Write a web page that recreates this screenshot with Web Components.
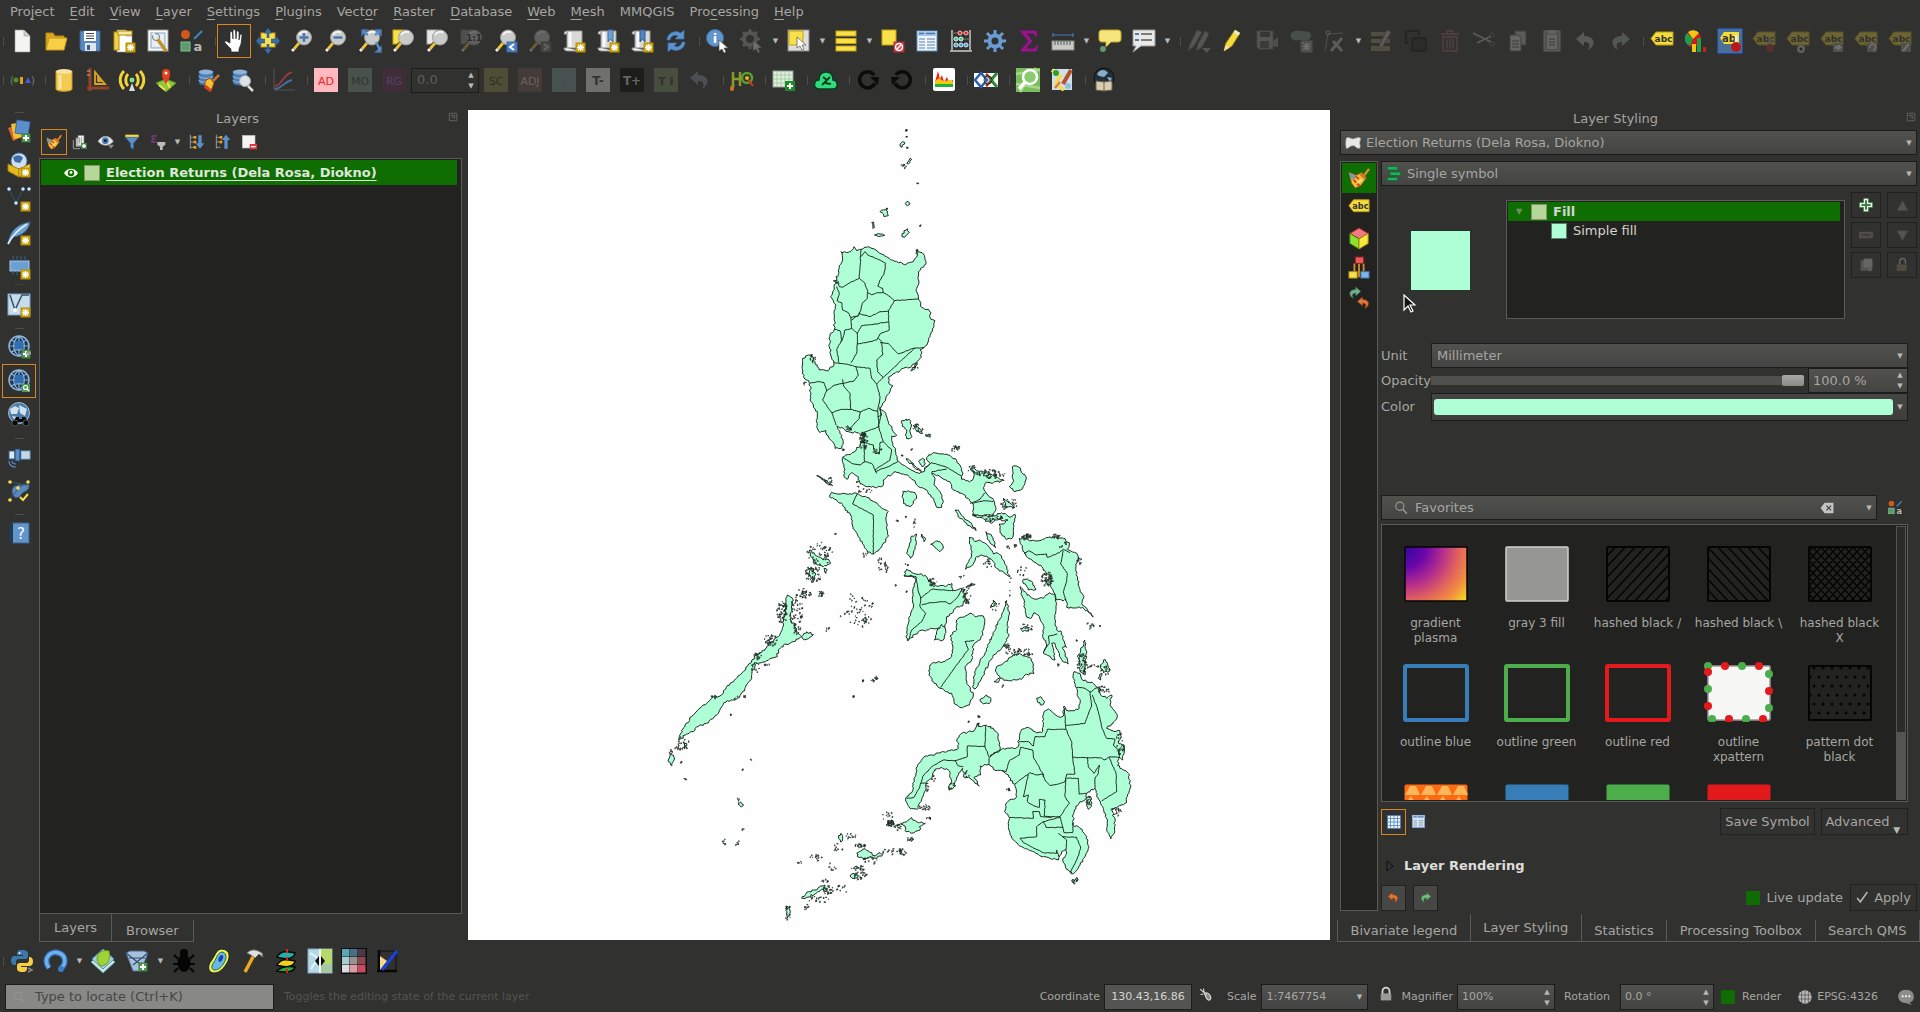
<!DOCTYPE html>
<html lang="en">
<head>
<meta charset="utf-8">
<title>QGIS</title>
<style>
html,body{margin:0;background:#31312f}
body{font:13px/18px "DejaVu Sans",sans-serif;color:#a6a6a3}
</style>
</head>
<body>
<qg-app></qg-app>
<script>
/* ---------- icons, drawn on a 24 x 24 grid ---------- */
const P=(d,f,s,w)=>`<path d="${d}" fill="${f||'none'}"${s?` stroke="${s}" stroke-width="${w||1}"`:''}/>`;
const R=(x,y,w,h,f,s)=>`<rect x="${x}" y="${y}" width="${w}" height="${h}" fill="${f}"${s?` stroke="${s}"`:''}/>`;
const C=(x,y,r,f,s,w)=>`<circle cx="${x}" cy="${y}" r="${r}" fill="${f}"${s?` stroke="${s}" stroke-width="${w||1}"`:''}/>`;
const T=(x,y,t,f,z,b)=>`<text x="${x}" y="${y}" fill="${f}" font-size="${z}" text-anchor="middle" font-weight="${b||'bold'}" font-family="DejaVu Sans,sans-serif">${t}</text>`;
const star=(x,y)=>R(x,y,9,9,'#d3a60b','#b58d04')+P(`M${x+4.5} ${y+1}v7M${x+1} ${y+4.5}h7M${x+2} ${y+2}l5 5M${x+7} ${y+2}l-5 5`,'','#fff',1.3);
const plus=(x,y)=>R(x,y,8,8,'#4f9a52','#3c7f40')+P(`M${x+4} ${y+1}v6M${x+1} ${y+4}h6`,'','#fff',2);
const ptr=(x,y)=>P(`M${x} ${y}v11l3-2 2 4 2-1-2-4h4z`,'#fff','#555',.7);
const mag=(g='')=>P('M9 14L2 22','','#222',4.5)+P('M9 14L4 20','','#e8c13a',3)+P('M4 20l-2 2','','#eee',3)+C(14,8.5,7.5,'#c9cbc9','#9a9c9a')+P('M9 6a6 6 0 0 1 8-2.5','','#f4f4f4',2)+g;
const page=(c='#f4f4f2')=>P('M5 1h9l6 6v16H5z',c,'#999',.6)+P('M14 1v6h6','#ccc','#999',.6);
const scroll=g=>P('M5 2h15v17H5z','#d9dad8','#999')+P('M5 2a3 3 0 0 0-3 3h3zM5 19H2c0 3 3 3 5 3h12','#eee','#999')+P('M8 3v15','','#f8f8f8',3)+g+star(14,14);
const tag=g=>P('M6 3h17v13H6l-5-6.500z','#f4dc3a','#b89c10')+T(13.5,13,'abc','#333',9)+(g||'');
const box=(bg,fg,t)=>R(0,0,24,24,bg)+T(12,16.5,t,fg,11,'normal');
const globe=(f,s)=>C(12,11,10,f,s,1.5)+P('M2 11h20M12 1v20M4 5c5 3 11 3 16 0M4 17c5-3 11-3 16 0M12 1c-7 5-7 15 0 20M12 1c7 5 7 15 0 20','',s,1.2);
const brush=P('M23 2l-6 8','','#e8892b',2.5)+P('M1 6l8 3 6-3 5 6-6 8-6 3-4-5z','#f1c232','#a5471c',.8)+P('M1 6l7 3-1 5-4-1z','#7a9ab0')+P('M6 14l7 7M8 10l4 3','','#d9401f',2)+P('M13 7l6 6','','#c9752c',2.5)+P('M9 18l6-4','','#fbe9a0',1.5);
const hdb=P('M3 3v12c0 3 14 3 14 0V3','#4f7fb5','#2f5580')+`<ellipse cx="10" cy="4" rx="7" ry="2.5" fill="#8fb4da"/>`+P('M3 8c0 3 14 3 14 0M3 12c0 3 14 3 14 0','','#9cc0e6');
const sheet=R(2,2,20,20,'#eef3f8','#5d8cc0')+R(2,2,20,5,'#a9c8e8')+P('M4 4.5h5M11 4.5h9','','#4a78b0',1.5);
const undoP='M10 3L2 10l8 7v-4c5 0 7 2 4 8 8-4 8-14-4-14z';
const flip=s=>`<g transform="translate(24 0) scale(-1 1)">${s}</g>`;
const I={
new:page(),
open:P('M2 20V4h7l2 3h9v4','#d9a520','#b88710')+P('M2 21l3-12h18l-3 12z','#f5cf45','#c9971a'),
save:P('M2 2h20v20H4l-2-2z','#5b88bd','#3a628f')+R(6,2,12,10,'#fff')+P('M8 4.5h8M8 7h8M8 9.5h8','','#444',1.2)+R(7,14,11,8,'#dfe5ea')+R(9,16,3,5,'#35608f'),
layout:page('#fff')+R(2,3,5,18,'#f0cf52','#b58d04')+R(6,2,14,4,'#f7e9a0','#b58d04')+star(14,14),
manager:R(2,1,20,21,'#fff','#9a9a98')+R(5,4,14,15,'#e9eef3','#7aa3cf')+P('M10 8l10 14','','#bf9324',3.5)+C(10,8,3.5,'#e8e8e6','#777')+P('M7 4l3 4','','#e9eef3',2.5),
style:C(5.5,5.5,4.5,'#d4571c')+P('M22 2l-8 8','','#3f86c8',2)+R(1,13,9,9,'#5d9a70','#7fc08d')+T(18,22,'a','#b9b9b6',13),
pan:P('M6 13l2 1V4c0-2 2-2 2.5 0l.5 6V2c0-2 2-2 2.5 0l.5 8 .5-7c0-1.5 2-1.5 2.5 0v8l1-5c.5-1.5 2-1 2 .5L19 15l-2 5v3H9v-3L3 14c-1-2 1-3 3-1z','#fff','#222',.7),
pansel:R(5,4,14,14,'#f7e04a','#c3a412')+P('M12-1l4 5h-3v6h7V7l4 5-4 5v-3h-7v6h3l-4 5-4-5h3v-6H4v3l-4-5 4-5v3h7V4H8z','#3a6ea8','#24456c',.5)+R(9,9,6,6,'#f7e04a'),
zin:mag(P('M14 4v9M9.500 8.500h9','','#4a78b0',2.5)),
zout:mag(P('M9.500 8.500h9','','#4a78b0',2.5)),
zfull:mag(P('M4 1h5L4 6zM23 1v5l-5-5zM23 18v5h-5z','#5b8fca','#4a7ab5',1.5)+P('M6 3l4 3M21 3l-4 3M18 13l4 8','','#5b8fca',2.5)),
zsel:R(1,1,11,14,'#f7e04a','#c3a412')+mag(),
zlay:R(1,1,11,14,'#e8e8e6','#aaa')+mag(),
z11:R(1,1,11,14,'#999','#777')+mag(T(14,12,'1:1','#222',9)),
zlast:mag(R(13,13,10,10,'#4a82c0','#386aa5')+P('M20 15l-4 3 4 3','','#fff',2)),
znext:mag(R(13,13,10,10,'#777','#555')+P('M16 15l4 3-4 3','','#ddd',2)),
bm1:scroll(''),bm2:scroll(P('M12 1h5v12l-2.500-3-2.500 3z','#6c9fd2','#3d6ea3')),bm3:scroll(P('M10 1h5v12l-2.500-3-2.500 3z','#4f86c0','#2d5a8c')),
refresh:P('M3 11a9 9 0 0 1 14-7l3-3v9h-9l3-3c-4-2-7 0-8 4zM21 13a9 9 0 0 1-14 7l-3 3v-9h9l-3 3c4 2 7 0 8-4z','#5b93cf','#3d70a8',.7),
info:C(9,9,8.5,'#6294cd','#3f70a8')+T(9,14,'i','#fff',13)+ptr(13,11),
action:C(10,10,6,'none','#aaa',4)+P('M10 0v4M10 16v4M0 10h4M16 10h4M3 3l3 3M14 14l3 3M17 3l-3 3M6 14l-3 3','','#aaa',2.5)+ptr(13,11),
select:R(1,1,21,21,'#ddd','#888')+R(2,2,14,14,'#f7e04a','#c3a412')+ptr(10,8),
selval:R(2,2,20,5,'#f7e04a','#c3a412')+R(2,9.5,20,5,'#f7e04a','#c3a412')+R(2,17,20,5,'#f7e04a','#c3a412'),
desel:R(1,1,14,15,'#f7e04a','#c3a412')+R(13,13,10,10,'#d8434a','#b02a30')+C(18,18,3.5,'none','#fff',1.5)+P('M16 20l4-4','','#fff',1.5),
table:sheet+P('M4 10h6M12 10h8M4 13h6M12 13h8M4 16h6M12 16h8M4 19h6M12 19h8','','#5c83ad',1.2),
abacus:P('M3 1v20M21 1v20M1 22h22','','#ccc',1.5)+P('M3 4h18M3 10h18M3 16h18','','#777',1)+C(11,4,2,'#d22','#fbb')+C(17,4,2,'#d22','#fbb')+C(7,10,2,'#5b9','#cfe')+C(12,10,2,'#5b9','#cfe')+C(7,16,2,'#59c','#cef')+C(12,16,2,'#59c','#cef')+C(17,16,2,'#59c','#cef'),
gear:C(12,12,5.5,'none','#6a9bd2',4)+P('M12 1v5M12 18v5M1 12h5M18 12h5M4 4l4 4M16 16l4 4M20 4l-4 4M8 16l-4 4','','#6a9bd2',3),
sigma:P('M4 2h15l1 5h-2c0-3-2-3-3-3H9l6 8-7 8h8c2 0 3-1 4-4h1l-2 6H4v-1l8-9-8-9z','#a10f96','#a10f96',.8),
ruler:P('M2 4v4M22 4v4M2 6h20','','#4a78b0',1.2)+R(1,12,22,9,'#c9c9c6','#888')+P('M4 12v4M7 12v4M10 12v4M13 12v4M16 12v4M19 12v4','','#555',1),
tip:P('M4 1h16c2 0 3 1 3 3v6c0 2-1 3-3 3h-7l-5 5v-5H4c-2 0-3-1-3-3V4c0-2 1-3 3-3z','#f6e57c','#c3a828')+C(5,20,3,'#5d9a70'),
anno:P('M1 1h22v16H9l-8 6 3-6H1z','#e9e9e7','#999')+R(3,4,4,2,'#4a78b0')+R(3,10,4,2,'#4a78b0')+P('M9 5h11M9 11h11','','#555',1.5),
pens:P('M1 22l2-7L10 1l5 2-8 14zM9 22l2-7 7-13 4 3-7 13z','#aaa','#666')+P('M15 19h9l-4.500 5z','#aaa'),
pencil:P('M3 22l2-8L14 1l5 3-8 13z','#f4dc3a','#a58a10')+P('M3 22l1.500-6 4 2.500z','#f0e0c0')+P('M14 1l5 3-1.500 2.500-5-3z','#e8e8e6'),
savee:P('M2 2h16v18H4l-2-2z','#aaa','#777')+R(5,3,10,5,'#444')+R(5,12,9,7,'#555')+P('M14 16l9-8v10z','#999'),
addpoly:P('M2 8c-2-6 6-7 10-6s10-1 10 4-4 6-8 5-10 3-12-3z','#7f968c')+R(12,12,11,11,'#888','#999')+P('M17.500 13v9M13 17.500h9M14 14l7 7M21 14l-7 7','','#fff',1.2),
vertex:P('M2 22L5 5l15-1','','#999')+C(5,4,2,'none','#ccc')+P('M8 22L19 9M10 12l9 10','','#bbb',3),
multi:R(1,3,19,4,'#98916a')+R(1,10,19,4,'#98916a')+R(1,17,19,5,'#98916a')+P('M8 21l2-6L17 1l4 2-8 14z','#bbb','#666'),
copymove:P('M5 14H2V2h13v4','','#0a0a0a',2)+`<rect x="8" y="9" width="14" height="13" rx="2" fill="#222" stroke="#0a0a0a" stroke-width="2"/>`,
trash:P('M3 5h18M9 4V2h6v2M5 8h14v14H5zM9 10v10M12 10v10M15 10v10','','#8c5a5a',1.8),
cut:P('M1 4l18 9M5 14l14-7','','#bbb',1.8)+C(20,6,2.2,'none','#777')+C(20,15,2.2,'none','#777'),
copy:R(9,2,11,14,'#bbb','#666')+P('M4 6h8l3 3v13H4z','#ddd','#666')+P('M6 12h7M6 15h7M6 18h7','','#555'),
paste:R(4,2,16,20,'#999','#ccc')+R(7,6,10,14,'#ddd')+R(8,1,8,4,'#ccc')+P('M9 10h6M9 13h6M9 16h6','','#555'),
undo:P(undoP,'#b4b4b0'),redo:flip(P(undoP,'#9fb0a8')),
label:tag(),
diagram:C(9,10,8,'#d21a1a')+P('M9 10L4 3a8 8 0 0 1 11 1z','#f3c614')+P('M9 10L3 4a8 8 0 0 0 3 13z','#1d9f4a')+R(8,15,4,8,'#f3c614')+R(13,9,4,14,'#1d9f4a')+R(19,18,3,5,'#d21a1a'),
lab2:R(0,0,24,24,'#4c6f96','#2b6be0')+P('M6 3h15v12H6l-4-6z','#f4dc3a')+T(11,13,'ab','#333',10)+P('M18 6v8','','#eee',2.5)+C(18,18,5,'#b81a1a'),
lab3:tag(P('M18 8v8','','#aaa',3)+C(18,19,4,'#a33')),
lab4:tag(C(15,20,4,'#ccc')+C(15,20,1.5,'#111')),
lab5:tag(R(13,14,10,9,'#999')+P('M15 17h3v-2l4 3.500-4 3.500v-2h-3z','#fff')),
lab6:tag(R(13,14,10,9,'#999')+P('M16 19a3 3 0 1 1 3 2','','#fff',1.5)),
lab7:tag(R(13,14,10,9,'#998')+P('M15 22l6-7','','#fff',2)),
/* second row */
dots:T(2,16,'(','#777',11,'normal')+C(6,12,2.5,'#4f8f2f')+R(10,9,3,7,'#e0a414')+P('M15 15l3-6 3 6z','#4b5ad0')+T(23,16,')','#777',11,'normal'),
cylinder:P('M4 3v18c0 3 16 3 16 0V3','#f1cb52','#c39a1d')+`<ellipse cx="12" cy="3.500" rx="8" ry="2.500" fill="#f8e2a0"/>`+P('M8 7v14','','#fae6a4',3),
square:P('M4 0v23M1 20h22','','#8f4527',3)+P('M9 16V4l10 12zM12 13v-3l3 3z','','#d9a520',1.8)+P('M1 3h3M1 7h3','','#d8b080',1),
antenna:C(12,12,3,'#7fe08a','#333')+P('M8 6c-3 3-3 9 0 12M4 3c-5 5-5 13 0 18','','#f0d23a',3)+P('M16 6c3 3 3 9 0 12M20 3c5 5 5 13 0 18','','#f0d23a',3)+P('M12 15l-3 8h6z','#ddd'),
pin:P('M2 15l10-4 10 4-10 9z','#8fc73e','#5b8f1d')+P('M5 17l6 5M12 12l4 8','','#f5e04a',2)+P('M12 16C8 10 8 8 8 5a4 4 0 0 1 8 0c0 3 0 5-4 11z','#e0401c')+C(12,5,1.5,'#fff'),
dbbrush:hdb+P('M23 7l-7 7','','#c9752c',2.5)+P('M9 13l5-3 4 5-3 8-6-3z','#f1c232','#a5471c')+P('M9 18l6 5','','#d9401f',3),
dbfind:hdb+C(15,13,5.5,'#dde3e8','#aaa')+P('M18 18l5 5','','#ddd',2.5),
graph:P('M2 1v21h21','','#555')+P('M3 18c8-1 5-9 17-14','','#a03c3c',1.8)+P('M3 21c8-1 8-7 17-9','','#4a6fa5',1.8),
ad:box('#ffb9bf','#f01c24','AD'),mo:box('#7d9c88','#35463c','MO'),rg:box('#5a2a54','#c060d0','RG'),
sc:box('#8c9148','#26271c','SC'),adj:box('#70504c','#e0d0cc','ADJ'),em:box('#7ca09a','#5a605c','.'),
tm:R(0,0,24,24,'#70706e')+T(12,17,'T-','#333',12),tp:R(0,0,24,24,'#1d1d1c')+T(12,17,'T+','#666664',12),
ti:R(0,0,24,24,'#7f9160')+T(12,17,'T I','#302f24',11),
undob:P(undoP,'#8795a8'),
hq:P('M3 4v16M10 4v14M3 11h7M1 20l3-4','','#8a9a2a',2.5)+C(17,10,5,'none','#5aa02c',2.5)+C(17,10,2,'#e8b31c')+P('M18 12l5 6','','#c83a1c',2)+C(2,21,2,'#e86b1c'),
gridadd:R(1,3,20,16,'#dff0df','#999')+P('M1 7h20M1 11h20M1 15h20M5 3v16M9 3v16M13 3v16M17 3v16','','#9cc79c',.8)+R(13,13,10,10,'#1f8a2c')+P('M18 15v6M15 18h6','','#fff',2),
cloud:P('M5 21c-7-1-5-9 0-9 0-7 4-8 7-8 6 0 7 4 7 8 5 0 6 9 0 9z','#2fdd7c','#0b3b20',1.5)+P('M8 17l8-8M11 15l6 1M13 12l-4-3','','#0b3b20',1.8),
cw:P('M18 7a8 8 0 1 0 1 8','','#0c0c0c',3.5)+P('M14 9h9l-1 8z','#0c0c0c'),
ccw:P('M6 7a8 8 0 1 1-1 8','','#0c0c0c',3.5)+P('M10 9H1l1 8z','#0c0c0c'),
hist:`<rect x="1" y="0" width="22" height="23" rx="2" fill="#fff"/>`+P('M3 14l3-11 2 8 2-4 2 7 3-5 2 5 4-2v3z','#e8261c')+P('M3 13l4-3 4 3 8-1 2 2v3H3z','#f3c614')+R(3,16,18,3,'#1db13a'),
ctrl:R(0,5,24,14,'#fff')+P('M1 12l6-7 6 7-6 7z','none','#2b5fa8',2.5)+P('M12 6l6 6-6 6','','#8c3a1c',2.5)+P('M23 5l-6 7 6 7','','#2a8a3a',3)+C(14,12,4,'none','#333',1),
osm:R(0,0,24,24,'#79bd5c')+P('M0 6l24-4M4 24L20 0M0 16l24 4','','#a6d98c',2.5)+C(14,9,7,'#8acb70','#fff',2.5)+P('M9 14l-6 7','','#fff',3.5),
maps:R(2,1,20,21,'#cfe0ea')+P('M2 2l8 6-4 8 8 6','','#f3dc5a',4)+C(6,5,3,'#2a9d3a')+C(18,18,3,'#8fc0dd')+P('M21 2l-8 14','','#b5502a',4)+P('M5 20l5-6','','#e07a4a',2.5),
world:C(12,10,10,'#22303c','#0c0f12')+P('M5 6c3-5 8-5 11-1l-4 4-5-1zM15 9l5 1-2 4z','#8aaec8')+P('M4 13l8 1 8-1v9l-8 1-8-1z','#d9cdb0','#6c6450')+P('M12 14v9','','#6c6450'),
/* left column */
src:P('M1 9l12-4 4 12-11 5z','#d8632c')+P('M4 5l12-2 3 14-12 3z','#f1c232')+P('M10 1l13 2-2 13-13-2z','#5b8fca','#3a6ea8')+plus(15,15),
pkg:C(12,8,8,'#cfdfee','#4a78b0')+P('M6 5c3-4 8-3 10 0l-3 5-5-1z','#3d6ea3')+P('M1 11l11 5v8L1 18z','#e8b91c','#a58208')+P('M23 11l-11 5v8l11-6z','#f7d94a','#a58208')+star(14,15),
shp:P('M2 2l7 14 7-14','','#34536f',1)+C(2,2,1.5,'#fff','#78a8d8')+C(16,2,1.5,'#fff','#78a8d8')+C(22,2,1.5,'#fff','#78a8d8')+C(9,16,1.5,'#fff','#78a8d8')+star(14,15),
feather:P('M1 23C3 8 12 3 23 1c-1 8-8 14-17 15z','#6c9fd2','#3a628f')+P('M1 23C6 13 12 8 20 3','','#dceaf6',1.8)+star(14,15),
mem:R(3,6,19,10,'#6c9fd2','#a9c8e8')+P('M6 1v5M10 1v5M14 1v5M18 1v5M6 16v4M10 16v4','','#3a628f',1)+star(14,15),
virt:R(1,1,22,21,'#c8dcec','#7aa3cf')+P('M3 2l5 15 7-15h7','','#34536f',1.5)+C(8,17,2,'#fff')+star(14,15),
wadd:globe('#22354a','#8db4dc')+R(8,6,8,8,'#2f6fb5')+plus(15,15)+P('M19 18h5','','#999',3),
wfind:globe('#22354a','#8db4dc')+R(8,6,8,8,'#2f6fb5')+R(15,15,8,8,'#4f9a52')+C(18.5,18.5,2,'none','#fff',1.2)+P('M20 20l2 2','','#fff',1.2),
wbin:C(12,10,10.5,'#4f7aa5','#9cc0e0')+P('M3 6l5-3 4 2-2 6-6 0zM12 2l8 4-2 7-5-3zM5 13l5 1-1 5z','#cfe2f2')+P('M9 14h3v2h3v-2h3l3 5H6z','#060606')+C(8,20,3,'#060606','#555')+C(19,20,3,'#060606','#555'),
sat:R(2,6,6,8,'#dfe8ee','#3a628f')+R(14,6,9,8,'#c3d7e6','#7aa3cf')+R(8,4,5,12,'#5b8fca','#24456c')+P('M2 16c0 4 3 6 7 6M5 16c0 2 1 3 4 3','','#5b8fca',1.2),
topo:P('M5 12c0-6 6-6 10-6s8-3 7 2-6 4-8 8-9 4-9-4z','#5b88bd','#34536f')+P('M3 3l17 3M12 9l9-7M3 20l9-11','','#34536f')+C(3,3,1.8,'#f7e04a')+C(21,3,1.8,'#f7e04a')+C(11,9,1.8,'#f7e04a')+C(3,21,1.8,'#f7e04a')+P('M13 18l3 3 5-6','','#f7e04a',2),
help:R(5,2,17,20,'#6294cd','#3a628f')+R(2,2,4,20,'#24394e')+T(14,18,'?','#fff',15,'normal'),
/* panels */
brush,
addgrp:R(6,6,10,13,'#ddd','#777')+R(9,2,9,15,'#f2f2f0','#777')+P('M2 9v13h10M11 5v9M14 5v9','','#999',1.5)+plus(14,14),
eyev:P('M0 11c6-10 17-10 23 0-6 8-17 8-23 0z','#e8e8e6','#999')+C(11,10,5,'#4f7fb5')+C(11,10,2.2,'#123')+P('M15 16h9l-4.500 6z','#888'),
funnel:R(2,1,20,4,'#f4dc3a')+P('M2 5h20l-8 9v9l-4-3v-6z','#5b8fca','#3a6ea8'),
eps:T(6,13,'ε','#6d3a70',20)+P('M11 12h12v4l-4 3v5h-4v-5l-4-3z','#bbb'),
expand:P('M2 1v21M2 5h6M2 12h6M2 20h6','','#999',1.5)+R(7,3,4,4,'#f0a020')+R(7,10,4,4,'#f0a020')+R(7,18,4,4,'#f0a020')+P('M14 2h5v12h4l-6.500 8L10 14h4z','#5b8fca'),
collapse:P('M2 1v21M2 5h6M2 12h6M2 20h6','','#999',1.5)+R(7,3,4,4,'#f0a020')+R(7,10,4,4,'#f0a020')+P('M14 22h5V9h4l-6.500-8L10 9h4z','#5b8fca'),
remove:R(2,2,19,19,'#f4f4f2','#bbb')+R(13,15,11,8,'#e03840')+P('M15 19h7','','#fff',2),
poly:P('M2 5c3-3 6 1 10 1s8-4 11-1c1 3-2 5-1 8s1 7-1 7c-5 0-5-5-10-4-4 0-5 4-9 4-1-5-1-10 0-15z','#e8e8e6','#bbb'),
single:R(2,1,15,5,'#1fb05a','#0b6b32')+R(6,9,16,5,'#1fb05a','#0b6b32')+R(2,17,15,5,'#1fb05a','#0b6b32'),
cube:P('M12 1l10 6-10 6L2 7z','#f07a80','#a01c20')+P('M2 7l10 6v11L2 18z','#8fe02a','#3f7a10')+P('M22 7l-10 6v11l10-6z','#f7e83a','#a58a10'),
tree:P('M12 7v15M7 7v10M17 7v10M4 17h6M14 17h6','','#d28a2a',2)+R(8,0,9,7,'#e85a5a','#a01c20')+R(1,16,9,7,'#f7e04a','#a58a10')+R(14,16,9,7,'#7fb4e6','#3a6ea8'),
hist2:`<g transform="translate(-1 -2) scale(.68)">${flip(P(undoP,'#6fb08a','#3d7053'))}</g><g transform="translate(9 9) scale(.68)">${P(undoP,'#e0743a','#9c4a1c')}</g>`,
addg:P('M8 1h8v7h7v8h-7v7H8v-7H1V8h7z','#fff','#3c9a48',1)+P('M12 4v16M4 12h16','','#3c7f40',3.5),
minus:R(1,7,22,10,'#6b6b69','#8a7577')+R(4,10,16,4,'#4a4a48'),
up:P('M12 3l10 18H2z','#777','#555'),down:P('M12 21L2 3h20z','#777','#555'),
dup:R(3,4,17,18,'#777','#555')+R(8,1,15,16,'#999')+C(19,19,4,'#888'),
lock2:P('M8 11V6a5 5 0 0 1 10 0v4','','#999',2.5)+R(3,11,17,11,'#6f6a50'),
lock:P('M6 12V7a6 6 0 0 1 12 0v5','','#d8d8d6',3)+R(3,11,18,12,'#9a9a98'),
search:C(10,9,7,'none','#9a9a98',2)+P('M15 14l7 8','','#9a9a98',2.5),
clear:P('M8 3h15v18H8L1 12z','#c4c4c2')+P('M11 8l8 8M19 8l-8 8','','#444',2.2),
grid:R(1,1,22,22,'#e9f1f9','#4a78b0')+P('M1 6h22M1 12h22M1 18h22M6 1v22M12 1v22M18 1v22','','#5b8fca',1.5),
undoc:P(undoP,'#e8742c','#a5471c',.7),redoc:flip(P(undoP,'#6fbf80','#34704a',.7)),
float:P('M3 3h18v18H3zM8 8h8M16 8v8M7 7l8 9','','#6a6a68',2),
eye:P('M0 12C6 2 18 2 24 12 18 22 6 22 0 12z','#f4fff0')+C(12,12,5.5,'#0f6b02')+C(12,11,2.5,'#f4fff0'),
check:P('M2 13l6 7L21 2','','#b0b0ae',3),
mouse:P('M2 2l8 7-2-8M3 12l5-1','','#ddd',2)+P('M10 10c6-4 14 5 11 11-4 4-8-1-11-11z','#888','#ddd',2)+P('M14 9l-1 5','','#ddd',1.5),
crs:C(12,12,10,'#bbb')+P('M2 9h20M2 15h20M12 2v20M7 3v18M17 3v18','','#555',1.2),
bubble:P('M12 1c16 0 14 19 5 19l4 4-9-3C-3 21-4 1 12 1z','#8d8d8b')+C(7,11,1.5,'#fff')+C(12,11,1.5,'#fff')+C(17,11,1.5,'#fff'),
/* bottom row */
python:P('M12 1c-5 0-5 2-5 5h6v1H4c-4 0-4 9 0 9h2v-3c0-2 1-3 3-3h6c2 0 3-1 3-3V5c0-3-2-4-6-4z','#3b78ab')+P('M12 23c5 0 5-2 5-5h-6v-1h9c4 0 4-9 0-9h-1v3c0 2-1 3-3 3h-6c-2 0-3 1-3 3v2c0 3 2 4 5 4z','#f7cf45')+C(9.5,4,1,'#fff')+P('M18 19l4 2-4 2','','#888',1.5),
snake:P('M5 19C-2 9 7 1 15 4c8 3 7 12 1 16','','#2f6cb0',6)+P('M5 19C-2 9 7 1 15 4c8 3 7 12 1 16','','#6fb0ee',3.5)+C(17,20,3,'#3b7cc4'),
qms:P('M12 3l12 10-12 11L0 13z','#d0e8e4','#5aa59c')+P('M12 0l11 10-11 10L1 10z','#a7cfe0','#4a90a8')+P('M6 11c0-9 7-10 12-9 2 10-2 15-9 15z','#9dd438','#6fa01c'),
meshadd:P('M1 4l4-2h14l4 2-7 18H8z','#a9c0dc','#4a6890')+P('M1 4l14 11M23 4L8 16M4 9h16','','#2f4c70',1.2)+plus(14,14),
bug:`<ellipse cx="12" cy="14" rx="6.500" ry="9" fill="#050505"/>`+C(12,4,4,'#050505')+P('M6 10L2 6M18 10l4-4M6 15H1M18 15h5M6 19l-4 4M18 19l4 4','','#050505',2),
contour:P('M16 0c9 1 8 9 5 14S14 24 8 24s-7-7-3-12S10 0 16 0z','#eef25a','#222')+P('M16 3c6 1 4 8 2 11s-5 7-9 7-4-4-1-8 3-9 8-10z','#6ab8e8','#206a30')+P('M16 6c3 1 0 6-2 7s-3-6 2-7z','#1c3fae'),
hammer:P('M14 6L5 23','','#f0a81c',3.5)+P('M7 4c5-5 10-3 15 0l1 4-4-3-4 4-4-3z','#e0e0de','#777'),
layersr:P('M3 8c5-8 12-5 18-4-1 6-9 7-18 4z','#1fb0a8','#040404',1.5)+P('M3 16c5-8 12-5 18-4-1 6-9 7-18 4z','#f0d21c','#040404',1.5)+P('M3 22c5-5 12-5 18-4-1 5-9 6-18 4z','#1db13a','#040404',1.5)+P('M13 0v4M13 8v3M13 20v4','','#e02020',2),
swipe:R(0,0,24,24,'#b4d8e8','#8ab')+R(12,0,12,15,'#b5d96a')+P('M12 15h12v9H12z','#a5c8a0')+P('M2 4l8 5M3 20l6-9','','#e8f4f8',2)+P('M12 0v24','','#f4f4f2',2)+P('M11 7v10l-4-5zM13 7v10l4-5z','#111'),
bivar:R(-1,-1,26,26,'#0c0c0c')+[['#5aa8b4','#4a6f84','#4a3a48'],['#a8ccd0','#9a9290','#8c4a50'],['#dcdce0','#e09aa4','#c84a5c']].map((r,j)=>r.map((c,i)=>R(i*8,j*8,7.5,7.5,c)).join('')).join(''),
plot:P('M3 1v22M1 22h20','','#060606',2.5)+P('M3 2h17v19','','#111',1)+P('M4 7l7 5-7 9z','#f7d98a')+P('M21 2L6 21','','#1c3fe0',3)
};
const base=`*{box-sizing:border-box}:host{display:block}
button,select,input{font:inherit;color:inherit;margin:0;border-radius:0}
button{display:flex;align-items:center;justify-content:center;padding:0;border:1px solid transparent;background:none}
select{appearance:none;background:none;border:0;padding:0 0 0 5px;flex:1;min-width:0;outline:0}
select option{background:#31312f}
input[type=text]{background:none;border:0;padding:0 0 0 4px;flex:1;min-width:0;width:20px;outline:0}
.f{display:flex;align-items:center;height:25px;border:1px solid #1c1c1b;background:linear-gradient(#51514e,#444442)}
.f>qg-icon{margin-left:4px;flex:none}
.ar{flex:none;width:14px;font-size:7px;line-height:8px;text-align:center;color:#b8b8b5}
.sp{display:flex;flex-direction:column;width:14px;gap:2px}.sp button{height:9px;font-size:7px;line-height:8px;color:#b8b8b5}
.ck{appearance:none;width:14px;height:14px;background:#0f6b02;margin:0;flex:none}`;
function define(name,css,html,init){
  const t=document.createElement('template');
  t.innerHTML=`<style>${base}${css}</style>${html}`;
  customElements.define(name,class extends HTMLElement{
    constructor(){super();this.attachShadow({mode:'open'}).append(t.content.cloneNode(true));}
    connectedCallback(){if(init&&!this.done){this.done=true;init(this,this.shadowRoot);}}
  });
}
const ic=(n,s=24)=>`<qg-icon name="${n}" size="${s}"></qg-icon>`;
const combo=(id,text,icon,aria)=>`<div class="f">${icon?ic(icon,16):''}<select id="${id}"${aria?` aria-label="${aria}"`:''}><option>${text}</option></select><span class="ar" aria-hidden="true">▼</span></div>`;
const spin=(id,v,aria)=>`<div class="f"><input type="text" id="${id}" value="${v}"${aria?` aria-label="${aria}"`:''}><span class="sp"><button aria-label="Increase">▲</button><button aria-label="Decrease">▼</button></span></div>`;

define('qg-icon',`:host{display:inline-block;line-height:0}svg{display:block;overflow:visible}`,`<svg viewBox="0 0 24 24" aria-hidden="true"></svg>`,(e,r)=>{
  const s=r.querySelector('svg'),z=e.getAttribute('size')||24;s.setAttribute('width',z);s.setAttribute('height',z);s.innerHTML=I[e.getAttribute('name')]||'';});

define('qg-tool',`:host{flex:none}button{width:34px;height:34px}:host([small]) button{width:26px;height:26px}
:host([on]) button{border-color:#d98520}:host([off]) qg-icon{opacity:.3}`,`<button></button>`,(e,r)=>{
  const b=r.querySelector('button'),n=e.getAttribute('icon');b.setAttribute('aria-label',n);b.innerHTML=ic(n,e.hasAttribute('small')?16:24);});

/* items: names in order; * = pressed, - = unavailable, | = handle, ; = narrow gap, v = drop-down arrow */
define('qg-toolbar',`:host{display:flex;align-items:center;overflow:hidden}
:host([vertical]){flex-direction:column}
.h{flex:none;width:8px;height:9px;background:linear-gradient(#4d4d4a,#4d4d4a) 6px 0/1px 9px no-repeat}
:host([vertical]) .h{width:9px;height:8px;background:linear-gradient(#4d4d4a,#4d4d4a) 0 6px/9px 1px no-repeat}
.g{flex:none;width:9px;height:4px;border-top:1px solid #3f3f3d}
.v{flex:none;width:13px;font-size:7px;line-height:8px;text-align:center;color:#b8b8b5}
.n{width:68px;flex:none;color:#5e5e5b}.n .f{background:none}.n .f input{padding-left:5px}`,`<slot></slot>`,(e,r)=>{
  const sm=e.hasAttribute('small')?' small':'';
  const h=e.getAttribute('items').split(/\s+/).map(t=>{
    if(t==='|')return'<span class="h"></span>';if(t===';')return'<span class="g"></span>';
    if(t==='v')return'<span class="v" aria-hidden="true">▼</span>';
    if(t==='spin')return`<div class="n">${spin('ang','0.0','Angle')}</div>`;
    const on=t.endsWith('*'),off=t.endsWith('-');return`<qg-tool icon="${t.replace(/[*-]$/,'')}"${sm}${on?' on':''}${off?' off':''}></qg-tool>`;}).join('');
  r.querySelector('slot').insertAdjacentHTML('beforebegin',h);});

define('qg-menubar',`nav{display:flex;gap:1px;height:22px;padding:1px 3px 0;align-items:center;overflow:hidden}button{padding:0 6px}u{text-underline-offset:3px}`,
`<nav>${['Pro<u>j</u>ect','<u>E</u>dit','<u>V</u>iew','<u>L</u>ayer','<u>S</u>ettings','<u>P</u>lugins','Vect<u>o</u>r','<u>R</u>aster','<u>D</u>atabase','<u>W</u>eb','<u>M</u>esh','MMQGIS','Pro<u>c</u>essing','<u>H</u>elp'].map(m=>`<button><span>${m}</span></button>`).join('')}</nav>`);

define('qg-title',`:host{display:flex;align-items:center;height:18px}span{flex:1;text-align:center}qg-icon{margin:-4px 4px 0 12px}`,`<span><slot></slot></span>${ic('float',10)}`);

/* tabs: labels separated by |, the open one marked with * */
define('qg-tabs',`:host{display:flex;height:28px;border-bottom:1px solid #5a5a57;align-items:flex-end}
button{border:0;border-left:1px solid #5a5a57;height:21px;padding:0 14px;white-space:nowrap;flex:0 1 auto;min-width:0}
:host([fill]) button{flex-grow:1;padding:0}
button:last-of-type{border-right:1px solid #5a5a57}
button.on{height:27px;border-right:1px solid #5a5a57}button.on+button{border-left:0}`,``,(e,r)=>{
  r.innerHTML+=e.getAttribute('tabs').split('|').map(t=>`<button${t[0]==='*'?' class="on" aria-pressed="true"':''}>${t.replace('*','')}</button>`).join('');});

define('qg-layers',`:host{display:flex;flex-direction:column;padding-top:10px}
qg-toolbar{height:26px;margin-top:1px;padding-left:2px}
.t{flex:1;border:1px solid #5a5a57;background:#222220;margin-top:3px;padding:1px}
.r{display:flex;align-items:center;height:25px;background:#0f6e02;margin-right:3px;padding-left:23px;color:#dfe6da;font-weight:bold}
.s{width:16px;height:16px;background:#b5d79a;border:1px solid #8d8f6c;margin:0 6px 0 6px}
.r u{text-underline-offset:3px;text-decoration-skip-ink:none}
qg-tabs{width:max-content}`,
`<qg-title>Layers</qg-title>
<qg-toolbar small items="brush* addgrp eyev funnel eps v expand collapse remove"></qg-toolbar>
<div class="t"><div class="r">${ic('eye',14)}<i class="s"></i><u>Election Returns (Dela Rosa, Diokno)</u></div></div>
<qg-tabs tabs="*Layers|Browser"></qg-tabs>`);

define('qg-symbol',`:host{display:flex;flex-direction:column;align-items:center;font-size:12px;line-height:15px;text-align:center}
svg{display:block;width:70px;height:60px}span{margin-top:13px;width:84px}:host([wide]) span{width:94px}`,`<svg viewBox="0 0 70 60"></svg><span><slot></slot></span>`,(e,r)=>{
  const k=e.getAttribute('kind');let h='';const bx=(f,s,w)=>`<rect x="4" y="4" width="62" height="54" rx="1" fill="${f}" stroke="${s}" stroke-width="${w}"/>`;
  const lines=(d,g)=>{let p='';for(let i=-60;i<70;i+=g)p+=d>0?`M${i} 60l56-60`:`M${i} 0l56 60`;return p;};
  const clip='<clipPath id="c"><rect x="4" y="4" width="62" height="54"/></clipPath>';
  if(k==='plasma')h=`<radialGradient id="g" gradientUnits="userSpaceOnUse" cx="4" cy="4" r="82"><stop offset="0" stop-color="#2f08a0"/><stop offset=".25" stop-color="#6a06a8"/><stop offset=".45" stop-color="#b02a90"/><stop offset=".65" stop-color="#e0605f"/><stop offset=".82" stop-color="#f2903f"/><stop offset="1" stop-color="#f2e422"/></radialGradient>`+bx('url(#g)','#050505',1.5);
  else if(k==='gray')h=bx('#969694','#d0d0ce',1.5);
  else if(k==='h1'||k==='h2'||k==='hx')h=clip+`<path clip-path="url(#c)" d="${(k!=='h2'?lines(1,k==='hx'?8:10):'')+(k!=='h1'?lines(-1,k==='hx'?8:10):'')}" stroke="#050505" stroke-width="1.5"/>`+bx('none','#050505',2);
  else if(k.startsWith('o#'))h=bx('none',k.slice(1),4);
  else if(k.startsWith('f#'))h=bx(k.slice(1),k.slice(1),1);
  else if(k==='x'){h=bx('#f7f8f6','#999',1.5);[[4,4,1],[21,4,0],[38,4,1],[55,4,0],[4,10,0],[4,27,1],[4,44,0],[65,12,1],[65,29,0],[65,46,1],[8,57,1],[25,57,0],[42,57,1],[59,57,0]].forEach(q=>h+=C(q[0],q[1],4,q[2]?'#4bae4a':'#e31a1c'));}
  else if(k==='dot'){h=bx('none','#050505',2);for(let j=0;j<6;j++)for(let i=0;i<7;i++){const x=9+i*9-(j%2?4:0);h+=C(x,6+j*9,1.5,'#050505');}}
  else if(k==='tri'){h=bx('#ff6a13','#ff6a13',1);for(let i=0;i<4;i++)h+=`<path d="M${4+i*16} 14l5-9h6l4 9zM${5+i*16} 22l5-7 4 7z" fill="#fdb75a"/>`;}
  r.querySelector('svg').innerHTML=h;});

define('qg-styling',`:host{display:flex;flex-direction:column;padding-top:10px}
.top{margin:2px 3px 0}
.cols{display:flex;flex:1;margin:6px 3px 3px;gap:3px;min-height:0}
.side{width:38px;flex:none;background:#222220;border:1px solid #5a5a57;padding:1px}
.side button{width:34px;height:30px}.side button.on{background:#0f6e02}
.main{flex:1;min-width:0;display:flex;flex-direction:column}
.sym{display:flex;margin-top:6px;height:151px}
.pv{flex:1;position:relative}.pv i{display:block;width:61px;height:61px;margin:38px 0 0 29px;background:#aeffd6;border:1px solid #26332c}
.pv svg{position:absolute;left:22px;top:102px}
.lt{width:339px;height:119px;margin:8px 6px 0 0;border:1px solid #5a5a57;background:#222220;padding:1px}
.lt div{display:flex;align-items:center;height:19px;color:#d4d4d1}
.lt .a{background:#0f6e02;margin-right:3px;padding-left:8px;font-weight:bold}.lt .a span{font-size:8px;color:#6d8f66;width:15px}
.lt i{width:16px;height:16px;margin-right:6px;background:#b5d79a;border:1px solid #8d8f6c}
.lt .b{padding-left:43px}.lt .b i{background:#aeffd6;border-color:#56806b}
.bt{display:grid;grid-template-columns:30px 30px;grid-auto-rows:26px;gap:4px 6px}
.bt button,.k{border:1px solid #21211f}.bt .d qg-icon{opacity:.5}
.form{display:grid;grid-template-columns:50px 1fr;margin:0 9px 0 0;align-items:center}
.op{display:flex;gap:4px}.op .f{width:100px}
input[type=range]{appearance:none;flex:1;min-width:0;margin:0;background:none}
input[type=range]::-webkit-slider-runnable-track{height:9px;background:#50504e}
input[type=range]::-webkit-slider-thumb{appearance:none;width:22px;height:11px;margin-top:-1px;background:linear-gradient(#a8a8a6,#8a8a88);border-radius:2px}
.col{width:100%;height:28px;border:1px solid #1c1c1b;background:linear-gradient(#454543,#3e3e3c)}.col i{flex:1;height:16px;margin-left:2px;background:#aeffd6;border-radius:3px}
.fav{display:flex;gap:10px;align-items:center;margin-top:74px}.fav .f{flex:1}.fav .f>qg-icon:first-child{margin:0 3px 0 12px}.fav .f input{padding-left:4px}.fav .ar{margin-left:28px}.fav>button{width:16px;margin-right:14px}
.list{display:flex;height:278px;margin:4px 9px 0 0;border:1px solid #5a5a57;background:#222220;padding:1px}
.g{flex:1;min-width:0;overflow:hidden;display:grid;grid-template-columns:repeat(5,101px);grid-auto-rows:119px;padding:17px 0 0 2px}
.sb{width:10px;display:flex;flex-direction:column;background:#555553}.sb i{height:207px;background:#2b2b29;border:1px solid #555553}
.row{display:flex;align-items:center;margin:6px 9px 0 0}.row .on{border-color:#d98520}
.i{width:25px;height:26px}.grow{flex:1}
.k{height:27px}.sv{width:95px;margin-right:6px}.ad{width:87px}.ad .ar{align-self:flex-end;font-size:9px}.ap{width:67px;gap:5px}
details{margin-top:22px;font-weight:bold;color:#dededb}summary{list-style:none;display:flex;align-items:center;gap:10px;padding-left:5px}
.ft{display:flex;align-items:center;gap:7px;margin-top:auto}.ft .i{border:1px solid #21211f;background:#474745}
label{white-space:nowrap}`,
`<qg-title>Layer Styling</qg-title>
<div class="top">${combo('ly','Election Returns (Dela Rosa, Diokno)','poly','Layer')}</div>
<div class="cols"><div class="side">${['brush','label','cube','tree','hist2'].map((n,i)=>`<button aria-label="${n}"${i?'':' class="on"'}>${ic(n,22)}</button>`).join('')}</div>
<div class="main">${combo('re','Single symbol','single','Renderer')}
<div class="sym"><div class="pv"><i></i><svg width="14" height="20" viewBox="0 0 14 20"><path d="M1 1v15l4-4 3 6 2-1-3-6h5z" fill="#111" stroke="#fff" stroke-width="1.2"/></svg></div>
<div class="lt"><div class="a"><span>▼</span><i></i>Fill</div><div class="b"><i></i>Simple fill</div></div>
<div class="bt"><button aria-label="Add">${ic('addg',14)}</button><button class="d" aria-label="Up">${ic('up',13)}</button><button class="d" aria-label="Remove">${ic('minus',14)}</button><button class="d" aria-label="Down">${ic('down',13)}</button><button class="d" aria-label="Duplicate">${ic('dup',14)}</button><button class="d" aria-label="Lock">${ic('lock2',14)}</button></div></div>
<div class="form"><label for="un">Unit</label>${combo('un','Millimeter')}
<label for="op">Opacity</label><div class="op"><input type="range" id="op" value="100">${spin('opv','100.0 %','Opacity value')}</div>
<label for="co">Color</label><button class="col" id="co"><i></i><span class="ar">▼</span></button></div>
<div class="fav"><div class="f">${ic('search',14)}<input type="text" value="Favorites" aria-label="Symbol filter">${ic('clear',14)}<span class="ar">▼</span></div><button aria-label="Style manager">${ic('style',15)}</button></div>
<div class="list"><div class="g"><qg-symbol kind="plasma">gradient plasma</qg-symbol><qg-symbol kind="gray">gray 3 fill</qg-symbol><qg-symbol kind="h1" wide>hashed black /</qg-symbol><qg-symbol kind="h2" wide>hashed black \\</qg-symbol><qg-symbol kind="hx">hashed black X</qg-symbol>
<qg-symbol kind="o#377eb8">outline blue</qg-symbol><qg-symbol kind="o#4bae4a">outline green</qg-symbol><qg-symbol kind="o#e31a1c">outline red</qg-symbol><qg-symbol kind="x">outline xpattern</qg-symbol><qg-symbol kind="dot">pattern dot black</qg-symbol>
<qg-symbol kind="tri"></qg-symbol><qg-symbol kind="f#377eb8"></qg-symbol><qg-symbol kind="f#4bae4a"></qg-symbol><qg-symbol kind="f#e31a1c"></qg-symbol></div><div class="sb"><i></i></div></div>
<div class="row"><button class="i on" aria-label="Icon view">${ic('grid',14)}</button><button class="i" aria-label="List view">${ic('table',15)}</button><span class="grow"></span><button class="k sv">Save Symbol</button><button class="k ad">Advanced<span class="ar">▼</span></button></div>
<details><summary><svg width="8" height="12"><path d="M1 1l6 5-6 5z" fill="#333" stroke="#0c0c0c"/></svg>Layer Rendering</summary></details>
<div class="ft"><button class="i" aria-label="Undo">${ic('undoc',13)}</button><button class="i" aria-label="Redo">${ic('redoc',13)}</button><span class="grow"></span><input class="ck" type="checkbox" id="lu" checked><label for="lu">Live update</label><button class="k ap">${ic('check',13)}Apply</button></div>
</div></div>
<qg-tabs fill tabs="Bivariate legend|*Layer Styling|Statistics|Processing Toolbox|Search QMS"></qg-tabs>`);

/* ---------- map: each sheet is traced at three units to the pixel ---------- */
const sheets=[
{o:[780,120],land:[
'183,395 200,398 215,392 222,380 230,392 243,388 265,380 285,388 300,400 335,420 355,428 378,433 400,425 412,405 408,390 418,396 430,402 438,425 432,440 415,455 416,480 410,505 415,537 425,562 445,568 453,578 450,592 465,602 462,620 450,650 432,683 420,690 425,700 420,716 408,728 395,738 370,745 345,760 325,772 326,790 338,797 330,815 318,832 308,850 300,865 318,880 325,905 340,935 350,945 335,948 338,970 348,1000 355,1024 385,1045 412,1058 428,1056 438,1040 450,1030 440,1020 445,1005 460,998 480,1002 505,1005 530,1022 545,1045 547,1065 545,1078 568,1086 580,1075 582,1058 572,1050 578,1040 590,1052 610,1056 640,1068 672,1082 640,1088 615,1090 612,1110 620,1122 638,1135 648,1165 640,1185 605,1188 578,1185 580,1160 568,1138 545,1120 515,1105 512,1090 480,1070 455,1058 465,1075 462,1095 480,1115 490,1145 485,1162 470,1162 460,1135 440,1110 415,1100 400,1080 370,1062 345,1055 320,1072 310,1080 310,1095 290,1103 262,1100 240,1090 235,1070 215,1058 202,1078 192,1070 192,1035 188,1012 215,1000 240,978 248,950 235,938 205,935 190,925 170,918 180,940 190,965 185,985 165,985 158,965 140,945 138,932 120,938 110,920 112,880 100,855 90,840 92,800 88,790 70,770 68,715 85,705 95,705 105,725 118,750 145,752 162,735 155,715 148,680 150,645 163,628 163,590 168,555 152,530 158,515 168,490 175,450 188,420',
'360,75 368,65 374,72 366,82','380,130 390,115 395,118 385,132','300,275 310,270 322,273 325,287 312,290','376,250 384,245 390,252 383,257','275,308 281,306 284,322 278,325','283,345 300,342 314,346 296,350','366,350 372,332 382,326 388,337 374,352',
'365,902 388,898 395,915 390,930 396,950 380,956 376,945 380,930 366,918','400,915 415,922 428,940 412,935','438,946 452,944 445,950',
'697,1040 710,1038 722,1050 738,1070 735,1090 722,1110 705,1115 688,1100 700,1085 697,1065','368,1115 385,1112 405,1118 410,1135 392,1160 370,1150 366,1130','378,1016 395,1028 425,1055 405,1045','110,1067 120,1070 142,1082 158,1098 135,1086','416,1025 428,1015 436,1030 426,1040','405,735 412,728 402,748 392,752','578,1186 610,1188 645,1188 665,1178 690,1192 705,1183 702,1218 696,1255 680,1258 660,1238 658,1212 675,1208 684,1200 650,1200 635,1210 610,1196'],
line:['243,388 240,440 238,475','168,490 175,485 178,500 188,502 210,488 238,475','243,410 255,395 262,404 300,420 317,430 312,462 300,480 293,498 308,505 310,518','238,475 255,490 263,515 262,535 247,550 243,570 235,588 212,592 205,578 188,570 185,548 172,543 178,520 170,500','263,518 275,524 290,518 310,518 330,530 343,542 415,537','235,580 270,590 300,575 325,573 343,542','325,573 328,630 300,642 290,660 270,665 232,672','212,592 215,625 232,640 232,672 230,700 213,728','214,600 235,585','232,640 245,617 285,612 325,605','163,628 180,632 185,660 170,688 177,728','185,665 195,630 215,625','162,728 200,732 228,740 270,745 275,775 290,792 310,772 293,755 290,720 308,705 305,665 295,655','300,668 325,670 355,702 400,685 432,683','405,683 310,772','228,740 235,765 222,783 190,790 165,795 140,812 132,788 112,785 90,790','140,812 128,840 155,878 168,915','187,778 192,800 210,820 212,868 240,876 265,865 293,875 300,830 290,792','155,878 185,868 212,868','240,876 238,895 205,930','293,875 297,920 245,940','300,860 302,890 295,918 310,965 335,990 330,1020 285,1050 290,1060','188,1012 215,1030 240,1035 255,1025 275,1030 285,1050','252,940 253,1025','285,1055 330,1038 355,1024','310,965 300,968 298,1002 285,1000 280,975 262,970','300,865 305,885 293,890','432,1048 455,1028 500,1042 545,1068','455,1055 500,1047','570,1150 600,1138 615,1118'],
dots:[[378,30,2,2,3],[378,50,2,2,2],[380,82,2,2,2],[370,137,8,6,8],[412,189,2,2,2],[420,316,2,2,2],[320,265,2,3,3],[98,712,8,16,22],[405,738,12,10,8],[165,485,8,5,8],[250,960,12,28,80],[200,925,14,9,14],[290,990,14,12,12],[415,922,20,12,18],[445,945,10,4,5],[525,984,14,10,24],[396,987,3,3,3],[630,1060,45,12,80],[685,1150,28,16,35],[145,1082,16,12,14],[255,1112,22,8,12],[400,1205,6,16,7],[349,1201,4,3,4],[378,1188,3,3,2],[75,790,8,6,5],[120,1280,30,12,8],[410,392,5,6,5],[575,1045,12,12,16],[190,990,5,4,4],[235,1090,10,10,10],[740,1250,14,10,30],[640,1190,30,10,25],[365,1005,3,3,3]]},
{o:[780,430],land:['148,200 155,187 172,192 200,192 230,190 248,200 268,204 290,218 308,236 325,245 318,270 320,290 326,318 305,350 280,372 262,366 240,325 218,295 212,255 190,230 170,210 158,203','525,240 535,240 552,262 575,280 588,302 560,280 540,265','618,305 635,318 648,352 630,338 622,320','568,322 580,325 585,335 598,330 625,348 640,372 655,370 668,388 690,440 670,425 650,415 640,395 620,378 605,375 590,380 575,408 557,418 575,375 572,345','395,318 410,312 405,350 400,374 392,385 380,370 388,345','452,343 470,333 486,342 490,355 480,365 468,355','425,312 436,325 432,335','718,325 745,330 780,332 810,320 832,326 855,325 868,345 862,358 890,370 895,380 888,410 892,440 900,485 912,500 905,520 922,538 940,560 908,532 885,534 860,532 858,512 830,510 820,480 800,460 810,440 785,410 760,395 738,378 728,358','720,470 735,485 758,505 790,505 808,488 825,495 828,530 825,580 830,600 845,608 850,630 860,652 848,652 865,702 848,695 838,670 825,640 815,640 825,690 790,670 800,645 788,620 792,590 778,560 762,548 752,566 738,555 732,520','728,452 742,446 758,458 768,478 745,480','372,438 380,418 400,430 420,432 440,440 450,455 470,468 500,468 515,460 520,482 545,475 556,500 548,528 530,530 520,545 500,560 495,592 440,600 415,605 382,632 378,620 388,560 400,535 398,480 408,450 398,438','470,605 485,583 497,600 490,630 462,630','530,570 570,550 590,560 610,558 614,575 608,610 600,630 580,645 575,690 555,710 560,760 580,795 568,825 540,832 522,820 515,790 480,775 460,755 447,735 450,705 460,697 495,694 515,680 518,645 510,618 530,600','680,512 688,545 682,580 685,620 665,655 640,675 625,705 600,755 585,777 578,770 588,715 610,680 635,620 670,545','648,715 670,700 690,682 718,670 750,682 760,705 762,730 735,735 725,748 690,752 660,745 650,728','600,808 620,795 633,805 628,820 610,822','770,805 780,800 794,815 788,825 774,818','915,630 920,680 912,720 915,735 900,725 900,695 892,680 902,660','962,705 975,688 990,722 970,728','640,510 650,522 635,530','722,595 738,590 748,600 728,605','670,205 705,232 680,230','955,745 966,730 962,750','642,755 658,745 655,757'],
line:['232,190 218,222 280,255 280,372','732,372 745,362 770,375 800,372 802,382 838,368 850,358 870,368','850,362 842,400 862,430 860,455 850,485 858,512','790,665 808,640 806,618 832,612','372,438 408,440 414,480 422,505 455,478 520,482','422,505 420,530 437,550 425,575 395,600 385,632','425,525 450,518 495,515 510,522 530,505 550,472','582,632 555,635 565,658 530,705 482,772','640,215 612,212 580,220'],
dots:[[457,455,14,12,35],[560,490,12,30,50],[575,465,14,6,12],[735,318,10,8,20],[830,318,14,8,20],[800,445,18,22,70],[725,420,20,16,14],[685,350,6,5,5],[705,345,5,10,6],[720,665,42,12,50],[680,650,12,12,20],[620,400,16,20,16],[905,700,14,34,60],[940,708,30,6,14],[975,720,14,14,16],[930,585,12,10,12],[960,585,2,2,2],[965,775,20,8,18],[740,590,16,14,14],[310,410,18,16,22],[300,390,8,12,8],[255,372,8,8,8],[240,540,42,55,60],[250,572,8,8,10],[120,490,10,8,8],[140,595,8,8,6],[280,747,12,6,10],[220,797,2,2,2],[248,749,2,2,2],[346,463,2,2,2],[378,482,2,2,2],[380,400,4,8,4],[550,440,14,10,5],[165,310,3,2,2],[833,705,3,5,4],[890,630,3,2,2],[668,766,2,2,2],[595,858,2,2,2],[898,390,8,14,14],[850,342,14,12,10],[645,525,14,14,10],[630,268,20,6,10],[690,470,3,30,5]]},
{o:[650,540],land:['88,600 92,580 105,555 125,530 155,500 170,490 190,470 210,468 240,430 270,405 300,370 318,345 345,330 365,305 385,290 400,258 400,235 408,205 408,180 412,165 428,175 425,215 420,240 435,255 440,278 455,290 430,305 400,315 385,330 382,350 350,362 320,370 306,395 305,415 285,445 262,475 245,480 222,488 205,520 170,550 140,560 130,575 110,582','478,30 500,48 520,58 528,50 542,70 520,80 490,68','476,85 488,85 497,105 490,125 482,110','455,290 470,275 490,284 475,296 460,298','60,640 70,645 72,660 65,678 55,665','100,605 110,610 104,627','620,940 645,926 665,938 675,948 690,938 698,944 680,956 660,950 640,956 622,950','455,1075 475,1055 500,1050 512,1038 525,1035 530,1055 515,1048 495,1062 465,1076','408,1098 420,1102 420,1120 412,1135','455,158 470,152 468,160','522,85 532,90 528,100','264,792 272,786 281,795 272,800','566,895 573,880 578,895 572,906','600,1008 612,1000 625,1008 612,1016','610,985 620,978 628,984','640,242 646,232 648,245'],
line:['310,345 320,340 324,352'],
dots:[[510,40,40,34,60],[490,100,26,26,60],[460,158,24,14,34],[395,215,16,36,80],[438,215,22,45,60],[362,298,20,18,50],[325,345,10,14,16],[315,380,12,18,20],[440,265,12,16,20],[512,160,10,8,10],[615,205,50,50,12],[98,610,22,22,24],[85,625,16,10,12],[62,635,10,8,10],[92,665,2,8,3],[104,718,4,4,3],[278,688,3,2,2],[302,658,2,2,2],[266,775,5,14,5],[278,866,3,2,3],[222,904,8,8,8],[265,912,12,14,8],[720,848,12,10,30],[710,825,18,16,7],[600,885,22,10,14],[562,920,18,12,14],[495,952,22,10,18],[448,966,8,6,6],[540,980,18,14,10],[525,1022,12,6,10],[630,915,16,8,24],[660,960,24,10,20],[630,1005,20,12,30],[625,982,24,8,16],[725,935,30,12,24],[760,930,14,14,16],[535,1048,18,14,30],[572,1045,22,14,14],[505,1078,42,10,24],[468,1100,8,10,10],[412,1115,10,24,18],[745,858,14,10,22],[780,893,10,8,14],[820,805,16,8,12],[835,835,10,8,6],[848,700,8,30,14],[680,410,12,8,5],[638,420,2,2,2],[610,467,2,2,2],[242,523,2,2,2],[190,470,10,6,10],[270,470,20,10,8],[350,368,14,6,6]]},
{o:[880,640],land:['288,262 292,250 300,260 320,256 340,265 355,285 360,330 330,350 345,340 370,325 400,325 415,320 418,290 425,268 445,262 465,275 485,278 492,215 505,207 535,230 550,228 552,198 558,210 570,212 595,208 600,190 590,145 580,115 582,95 600,100 605,118 640,130 655,148 662,165 680,175 695,165 690,195 712,225 700,250 680,265 705,275 720,272 722,295 715,305 732,320 728,360 718,352 712,365 720,385 745,400 752,435 742,470 735,490 718,497 695,510 705,545 702,580 692,597 680,565 680,535 668,500 650,470 645,445 620,460 615,480 600,485 583,510 578,555 600,565 620,590 625,625 615,650 590,690 575,702 565,690 548,660 560,640 558,628 545,635 535,660 490,650 425,620 395,595 385,560 388,532 374,515 378,490 410,470 408,445 398,430 385,405 365,392 340,388 330,375 300,378 302,405 282,412 298,438 285,430 270,415 250,410 248,385 235,405 225,425 222,442 208,450 208,435 215,425 205,390 185,382 165,388 155,415 140,425 138,450 125,480 110,508 90,505 78,485 80,470 98,452 98,430 108,405 108,385 130,352 155,345 190,335 210,332 235,325 232,295 245,280 275,275','62,550 80,545 95,533 115,548 136,550 118,560 120,570 95,580 75,572 75,558','575,722 584,720 582,730','590,712 593,722 588,726','620,475 632,470 634,500 625,508 620,495'],
line:['317,258 315,320 262,318 262,350 225,362','315,320 328,352 326,375','80,475 102,472 118,445 128,410 155,380 190,360 225,362 235,378 250,380','122,430 145,430','417,305 445,305 460,318 465,290 495,290 502,268 558,268','553,205 558,268 575,305 578,352 585,402 560,403 555,425 535,432 510,437 495,420 490,405 460,350 458,330 422,322 418,345 388,362 378,395 365,392','558,256 615,250 635,195 630,155 615,145 590,142','630,157 655,140','637,165 655,215 665,260 680,295 705,298 700,315 715,330 718,352','578,352 665,354 672,360 690,350 718,352','622,352 625,380 642,400 658,375 655,400 645,415 645,445','688,352 708,400 710,455 665,482','560,415 595,415 597,462 620,460','405,432 450,398 470,405 490,402 490,412','445,403 430,470 445,465 442,485 462,498 478,502 478,478 495,480 493,528 515,530 540,530','557,415 555,470 568,490 540,530 552,578 578,578 580,548','388,532 460,535 458,515 478,515 482,530 515,532','490,545 540,532','490,545 498,562 550,562','490,545 470,560 470,590 420,595 430,608 490,638 530,640 530,630 536,650','535,580 560,600 558,628','548,590 590,592 602,625 590,660 570,700','692,508 705,505 712,520 700,524'],
dots:[[30,548,10,10,26],[385,447,6,6,6],[720,322,12,25,30],[715,512,8,12,12],[628,482,10,14,14],[295,250,6,6,6],[215,440,10,12,12],[585,722,8,8,6],[258,400,10,10,10],[265,243,2,2,2],[295,228,2,2,2],[132,500,18,8,12],[20,520,10,12,6],[145,440,8,12,6],[668,150,20,8,14],[715,285,10,10,10]]}];
define('qg-map',`:host{background:#fefefe;overflow:hidden}svg{display:block;width:100%;height:100%}`,`<svg viewBox="468 110 862 830" preserveAspectRatio="xMidYMid slice" role="img" aria-label="Map of the Philippines"></svg>`,(e,r)=>{
  let seed=7;const rnd=()=>(seed=(seed*16807)%2147483647)/2147483647;
  /* every edge is broken into short jittered pieces, which gives the coast its ragged look */
  const rough=(s,close,amp)=>{const p=s.split(' ').map(q=>q.split(',').map(Number));let d='M'+p[0];const n=close?p.length:p.length-1;
    for(let i=0;i<n;i++){const a=p[i],b=p[(i+1)%p.length],L=Math.hypot(b[0]-a[0],b[1]-a[1]),k=Math.max(1,Math.round(L/6));
      for(let j=1;j<k;j++){const t=j/k;d+='L'+(a[0]+(b[0]-a[0])*t+(rnd()-.5)*amp).toFixed(1)+','+(a[1]+(b[1]-a[1])*t+(rnd()-.5)*amp).toFixed(1);}d+='L'+b;}
    return d+(close?'Z':'');};
  r.querySelector('svg').innerHTML=sheets.map(s=>`<g transform="translate(${s.o}) scale(.33333)" stroke="#1e2923" stroke-width="3" stroke-linejoin="round">`+
    s.land.map(l=>`<path fill="#aeffd6" d="${rough(l,true,6)}"/>`).join('')+
    `<path fill="none" d="${s.line.map(l=>rough(l,false,2)).join('')}"/>`+
    `<path fill="#aeffd6" stroke-width="2.2" d="${s.dots.map(([x,y,a,b,n])=>{let d='';n=Math.ceil(n*.7);for(let i=0;i<n;i++){const t=rnd()*6.283,q=Math.sqrt(rnd()),w=1+rnd()*4;d+=`M${(x+a*q*Math.cos(t)).toFixed(1)} ${(y+b*q*Math.sin(t)).toFixed(1)}l${w.toFixed(1)} ${(rnd()*3).toFixed(1)} ${(-w).toFixed(1)} ${(rnd()*4).toFixed(1)}z`;}return d;}).join('')}"/></g>`).join('');});

define('qg-status',`:host{display:flex;align-items:center;height:32px;padding:2px 6px 0 5px;font-size:11px;white-space:nowrap;overflow:hidden}
.f{height:26px}.w107{width:107px}.w98{width:98px;margin-right:9px}.w94{width:94px;margin-right:7px}
.loc{width:269px;background:#888886;color:#444442;font-size:13px;flex:none}.loc>qg-icon{margin:0 5px 0 7px;opacity:.6}.loc input::placeholder{color:#474745;opacity:1}
.m{flex:1;color:#545452;margin-left:10px}label{margin-right:4px}
.cx{width:88px;background:#545452;color:#d4d4d1}.cx input{text-align:center;padding:0}
.mo{margin:0 15px 0 7px}.lk{margin:0 9px 0 11px}.ro{margin-right:10px}.rn{margin:0 16px 0 7px}.ep{margin:0 20px 0 4px}`,
`<div class="f loc">${ic('search',13)}<input type="text" placeholder="Type to locate (Ctrl+K)" aria-label="Locate"></div>
<span class="m">Toggles the editing state of the current layer</span>
<label for="c">Coordinate</label><div class="f cx"><input type="text" id="c" value="130.43,16.86"></div><span class="mo">${ic('mouse',13)}</span>
<label for="s">Scale</label><div class="w107">${combo('s','1:7467754')}</div>
<span class="lk">${ic('lock',14)}</span>
<label for="mg">Magnifier</label><div class="w98">${spin('mg','100%')}</div>
<label for="ro" class="ro">Rotation</label><div class="w94">${spin('ro','0.0 °')}</div>
<input type="checkbox" class="ck" id="rn" checked><label for="rn" class="rn">Render</label>
${ic('crs',16)}<span class="ep">EPSG:4326</span>${ic('bubble',16)}`);

define('qg-app',`:host{display:flex;flex-direction:column;min-height:100vh;overflow:hidden}
.tb{height:38px;margin-left:-3px}.tb+.tb{margin-top:1px}
.mid{flex:1;display:flex;min-height:0;margin-top:1px}
.left{width:38px;padding-top:6px;flex:none}
qg-layers{flex:0 0 423px;margin-left:1px}
qg-map{flex:1;min-width:0;margin:10px 7px 2px 6px}
qg-styling{flex:0 0 583px}`,
`<qg-menubar></qg-menubar>
<qg-toolbar class="tb" items="| new open save layout manager style | pan* pansel zin zout zfull zsel zlay z11- zlast znext- bm1 bm2 bm3 refresh | info action- v select v selval v desel table abacus gear sigma ruler v tip anno v | pens- pencil savee- addpoly- vertex- v multi- copymove- trash- cut- copy- paste- undo- redo- | label diagram lab2 lab3- lab4- lab5- lab6- lab7-"></qg-toolbar>
<qg-toolbar class="tb" items="| dots | cylinder square antenna pin | dbbrush dbfind | graph | ad mo- rg- spin sc- adj- em- tm tp ti- undob- | hq | gridadd | cloud | cw ccw | hist | ctrl | osm maps | world"></qg-toolbar>
<div class="mid"><qg-toolbar vertical class="left" items="| src pkg shp feather mem ; virt | wadd wfind* wbin | sat topo | help"></qg-toolbar>
<qg-layers></qg-layers><qg-map></qg-map><qg-styling></qg-styling></div>
<qg-toolbar class="tb" items="| python snake v qms meshadd v bug contour hammer layersr swipe bivar plot"></qg-toolbar>
<qg-status></qg-status>`);
</script>
</body>
</html>
